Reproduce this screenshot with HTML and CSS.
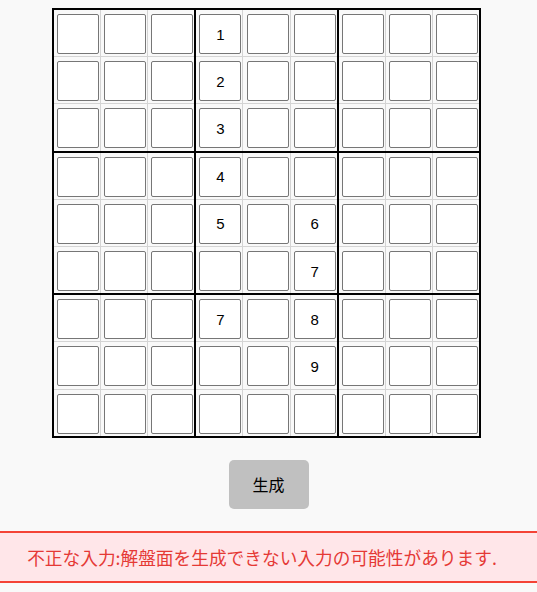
FILE: index.html
```html
<!DOCTYPE html>
<html lang="ja">
<head>
<meta charset="utf-8">
<title>数独</title>
<link rel="stylesheet" href="styles.css">
</head>
<body>
<main class="app">
  <table class="board">
    <tbody>
      <tr><td><input class="cell" type="text"></td><td><input class="cell" type="text"></td><td class="box-r"><input class="cell" type="text"></td><td><input class="cell" type="text" value="1"></td><td><input class="cell" type="text"></td><td class="box-r"><input class="cell" type="text"></td><td><input class="cell" type="text"></td><td><input class="cell" type="text"></td><td><input class="cell" type="text"></td></tr>
      <tr><td><input class="cell" type="text"></td><td><input class="cell" type="text"></td><td class="box-r"><input class="cell" type="text"></td><td><input class="cell" type="text" value="2"></td><td><input class="cell" type="text"></td><td class="box-r"><input class="cell" type="text"></td><td><input class="cell" type="text"></td><td><input class="cell" type="text"></td><td><input class="cell" type="text"></td></tr>
      <tr class="box-b"><td><input class="cell" type="text"></td><td><input class="cell" type="text"></td><td class="box-r"><input class="cell" type="text"></td><td><input class="cell" type="text" value="3"></td><td><input class="cell" type="text"></td><td class="box-r"><input class="cell" type="text"></td><td><input class="cell" type="text"></td><td><input class="cell" type="text"></td><td><input class="cell" type="text"></td></tr>
      <tr><td><input class="cell" type="text"></td><td><input class="cell" type="text"></td><td class="box-r"><input class="cell" type="text"></td><td><input class="cell" type="text" value="4"></td><td><input class="cell" type="text"></td><td class="box-r"><input class="cell" type="text"></td><td><input class="cell" type="text"></td><td><input class="cell" type="text"></td><td><input class="cell" type="text"></td></tr>
      <tr><td><input class="cell" type="text"></td><td><input class="cell" type="text"></td><td class="box-r"><input class="cell" type="text"></td><td><input class="cell" type="text" value="5"></td><td><input class="cell" type="text"></td><td class="box-r"><input class="cell" type="text" value="6"></td><td><input class="cell" type="text"></td><td><input class="cell" type="text"></td><td><input class="cell" type="text"></td></tr>
      <tr class="box-b"><td><input class="cell" type="text"></td><td><input class="cell" type="text"></td><td class="box-r"><input class="cell" type="text"></td><td><input class="cell" type="text"></td><td><input class="cell" type="text"></td><td class="box-r"><input class="cell" type="text" value="7"></td><td><input class="cell" type="text"></td><td><input class="cell" type="text"></td><td><input class="cell" type="text"></td></tr>
      <tr><td><input class="cell" type="text"></td><td><input class="cell" type="text"></td><td class="box-r"><input class="cell" type="text"></td><td><input class="cell" type="text" value="7"></td><td><input class="cell" type="text"></td><td class="box-r"><input class="cell" type="text" value="8"></td><td><input class="cell" type="text"></td><td><input class="cell" type="text"></td><td><input class="cell" type="text"></td></tr>
      <tr><td><input class="cell" type="text"></td><td><input class="cell" type="text"></td><td class="box-r"><input class="cell" type="text"></td><td><input class="cell" type="text"></td><td><input class="cell" type="text"></td><td class="box-r"><input class="cell" type="text" value="9"></td><td><input class="cell" type="text"></td><td><input class="cell" type="text"></td><td><input class="cell" type="text"></td></tr>
      <tr><td><input class="cell" type="text"></td><td><input class="cell" type="text"></td><td class="box-r"><input class="cell" type="text"></td><td><input class="cell" type="text"></td><td><input class="cell" type="text"></td><td class="box-r"><input class="cell" type="text"></td><td><input class="cell" type="text"></td><td><input class="cell" type="text"></td><td><input class="cell" type="text"></td></tr>
    </tbody>
  </table>
  <button class="generate" type="button">生成</button>
  <div class="error">不正な入力:解盤面を生成できない入力の可能性があります.</div>
</main>
</body>
</html>
```
FILE: styles.css
```css
html, body {
  margin: 0;
  padding: 0;
  background: #f9f9f9;
}

.app {
  display: flex;
  flex-direction: column;
  align-items: center;
  padding-top: 8px;
  font-family: "Noto Sans CJK JP", "Noto Sans", sans-serif;
}

.board {
  border-collapse: collapse;
  border: 2px solid #000;
  margin-right: 4px;
}

.board td {
  border: 1px solid #d4d4d4;
  padding: 4.1px 1.1px 2.1px 3.1px;
}

.board td.box-r {
  border-right: 2px solid #000;
}

.board tr.box-b td {
  border-bottom: 2px solid #000;
}

.cell {
  box-sizing: border-box;
  display: block;
  width: 42px;
  height: 40px;
  margin: 0;
  padding: 0;
  border: 1px solid #767676;
  border-radius: 2px;
  background: #fff;
  text-align: center;
  font-family: "Liberation Sans", Arial, sans-serif;
  font-size: 15px;
  color: #000;
}

.generate {
  margin-top: 22px;
  width: 80px;
  height: 49px;
  border: none;
  border-radius: 5px;
  background: #c0c0c0;
  color: #000;
  font-family: "Noto Sans CJK JP", sans-serif;
  font-size: 16px;
  padding: 0;
}

.error {
  align-self: stretch;
  margin-top: 22px;
  box-sizing: border-box;
  height: 52px;
  display: flex;
  align-items: center;
  justify-content: center;
  border-top: 2px solid #f44336;
  border-bottom: 2px solid #f44336;
  background: #ffe6e9;
  color: #e53935;
  font-size: 17.7px;
  padding-right: 13px;
}
```
